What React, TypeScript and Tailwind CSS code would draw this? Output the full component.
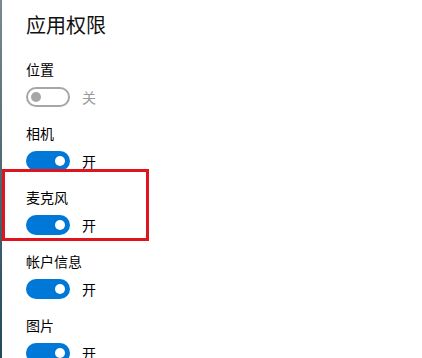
import React from "react";

type Item = { label: string; on: boolean };

const items: Item[] = [
  { label: "位置", on: false },
  { label: "相机", on: true },
  { label: "麦克风", on: true },
  { label: "帐户信息", on: true },
  { label: "图片", on: true },
];

function Toggle({ on }: { on: boolean }) {
  if (on) {
    return (
      <div className="w-[44px] h-[20px] rounded-full bg-[#0078d7] flex items-center justify-end pr-[5px] shrink-0">
        <div className="w-[10px] h-[10px] rounded-full bg-white" />
      </div>
    );
  }
  return (
    <div className="w-[44px] h-[20px] rounded-full border-2 border-[#a6a6a6] flex items-center pl-[3px] shrink-0">
      <div className="w-[10px] h-[10px] rounded-full bg-[#a6a6a6]" />
    </div>
  );
}

export default function App() {
  return (
    <div
      className="relative w-[422px] h-[358px] overflow-hidden bg-white flex"
      style={{ fontFamily: '"Noto Sans CJK SC", "Noto Sans", sans-serif' }}
    >
      <div className="w-[2px] h-full bg-gradient-to-b from-[#7c8a90] via-[#4d6670] to-[#1f4b5a] shrink-0" />
      <div className="flex flex-col pl-[24px]">
        <div className="mt-[15px] text-[20px] leading-[20px] text-[#111] h-[20px]">应用权限</div>
        <div className="flex flex-col mt-[27px] gap-[19px]">
          {items.map((it) => (
            <div key={it.label} className="flex flex-col gap-[11px]">
              <div className="text-[14px] leading-[14px] h-[14px] text-black">{it.label}</div>
              <div className="flex items-center gap-[12px] h-[20px]">
                <Toggle on={it.on} />
                <span className={`text-[14px] leading-[14px] ${it.on ? "text-black" : "text-[#9a9a9a]"}`}>
                  {it.on ? "开" : "关"}
                </span>
              </div>
            </div>
          ))}
        </div>
      </div>
      <div className="absolute left-[2px] top-[169px] w-[147px] h-[72px] border-[3px] border-[#e0141e] pointer-events-none" />
    </div>
  );
}
